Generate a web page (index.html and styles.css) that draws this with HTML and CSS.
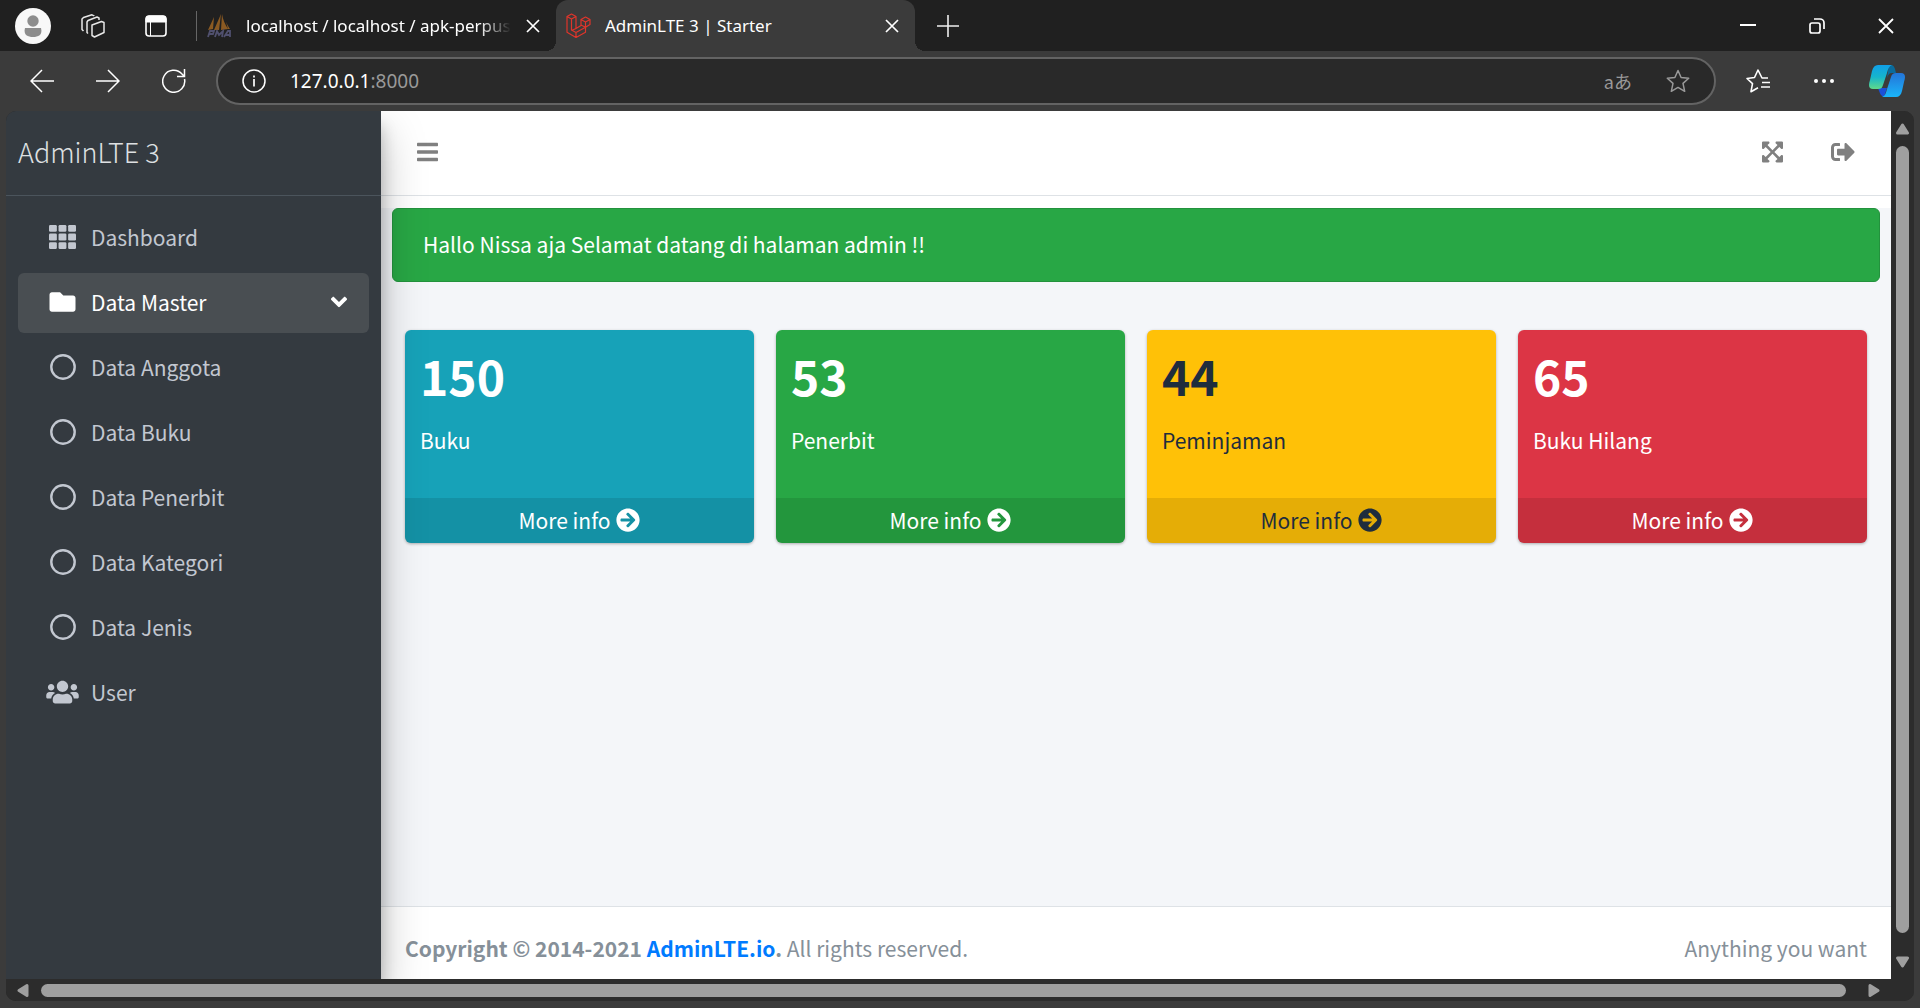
FILE: index.html
```html
<!DOCTYPE html>
<html lang="id">
<head>
<meta charset="utf-8">
<title>AdminLTE 3 | Starter</title>
<link rel="stylesheet" href="styles.css">
</head>
<body>
<svg class="sprite" aria-hidden="true">
  <symbol id="close" viewBox="0 0 16 16"><path d="M2 2l12 12M14 2L2 14" fill="none" stroke="currentColor" stroke-width="1.7"/></symbol>
  <symbol id="ring" viewBox="0 0 26 26"><circle cx="13" cy="13" r="11.700" fill="none" stroke="currentColor" stroke-width="2.400"/></symbol>
  <symbol id="star" viewBox="0 0 24 24"><path d="M12 1.500l3.100 7 7.600.8-5.700 5.100 1.700 7.900-6.700-3.900-6.700 3.900L7 14.400 1.300 9.300l7.600-.8z" fill="none" stroke="currentColor" stroke-width="1.500" stroke-linejoin="round"/></symbol>
  <symbol id="arrow-circle" viewBox="0 0 512 512"><path fill="currentColor" d="M256 8c137 0 248 111 248 248S393 504 256 504 8 393 8 256 119 8 256 8zm-28.900 143.600l75.500 72.400H120c-13.300 0-24 10.700-24 24v16c0 13.300 10.700 24 24 24h182.600l-75.500 72.400c-9.700 9.300-9.900 24.800-.4 34.300l11 10.900c9.400 9.400 24.600 9.400 33.900 0L404.300 273c9.400-9.400 9.400-24.600 0-33.900L271.600 106.300c-9.400-9.400-24.600-9.400-33.900 0l-11 10.900c-9.500 9.600-9.300 25.100.4 34.400z"/></symbol>
</svg>
<div class="browser">
  <div class="tabstrip">
    <button class="btn profile" aria-label="Profile"><svg viewBox="0 0 36 36"><circle cx="18" cy="18" r="18" fill="#f8f8f8"/><circle cx="18" cy="13" r="5.700" fill="#8d8d8d"/><path d="M10 20h16c2 7-3 9-8 9s-10-2-8-9z" fill="#8d8d8d"/></svg></button>
    <button class="btn collections" aria-label="Workspaces"><svg viewBox="0 0 24 24" fill="none" stroke="#e8e8e8" stroke-width="1.500" stroke-linejoin="round"><path d="M11 11l9.500-3.500 2.500 1v10L13.500 23 11 21.500zM7 19.500l-1-1V8l1-1.500L16 3l2 1v2M2.500 17L1 15.500V5l1.500-1.500L11 .800l2 1V2"/></svg></button>
    <button class="btn tabmenu" aria-label="Tab actions"><svg viewBox="0 0 22 22"><rect x="1" y="1" width="20" height="20" rx="3" fill="none" stroke="#fff" stroke-width="1.600"/><path d="M1 6V4a3 3 0 0 1 3-3h14a3 3 0 0 1 3 3v3H1zM5.500 7v14" fill="#fff" stroke="#fff"/></svg></button>
    <span class="divider"></span>
    <div class="tab">
      <svg class="favicon" viewBox="0 0 25 25"><path d="M7 4L6 16l-5 1zM14 1l-2 16H7zM15 1c1 6 3 10 6 15l-7 1zM18 5c1 5 3 8 5 11h-2z" fill="#8b5a22"/><path d="M1 24l2-6h4l-1 3H2M8 24l2-6 2 4 4-4-1 6M17 24l4-6h2v6M19 22h4" fill="none" stroke="#50506e" stroke-width="1.800"/></svg>
      <span class="tab-title faded">localhost / localhost / apk-perpus</span>
      <button class="btn close" aria-label="Close tab"><svg viewBox="0 0 16 16"><use href="#close"/></svg></button>
    </div>
    <div class="tab active">
      <svg class="favicon" viewBox="0 0 25 25" fill="none" stroke="#e0352b" stroke-width="1.200" stroke-linejoin="round"><path d="M1 3.500L5.500 1 10 3.500v12l5-3V6.500L19.500 4 24 6.500v5l-4.500 2.700v5L10 24.500l-9-5.200zM1 3.500L5.500 6 10 3.500M5.500 6v11l4.500 2.500v5M10 15.500l-4.500 2M10 19.500l9.500-5.300L15 12M15 6.500L19.500 9 24 6.500M19.500 9v5.200"/></svg>
      <span class="tab-title">AdminLTE 3 | Starter</span>
      <button class="btn close" aria-label="Close tab"><svg viewBox="0 0 16 16"><use href="#close"/></svg></button>
    </div>
    <button class="btn newtab" aria-label="New tab"><svg viewBox="0 0 22 22"><path d="M11 0v22M0 11h22" stroke="#eee" stroke-width="1.600"/></svg></button>
    <div class="window-controls">
      <button class="btn" aria-label="Minimize"><svg viewBox="0 0 16 16"><path d="M0 7h16" stroke="#fff" stroke-width="2"/></svg></button>
      <button class="btn" aria-label="Restore"><svg viewBox="0 0 16 16" fill="none" stroke="#fff" stroke-width="1.700"><rect x="1" y="5" width="10" height="10" rx="2"/><path d="M5 1h6a4 4 0 0 1 4 4v6"/></svg></button>
      <button class="btn" aria-label="Close"><svg viewBox="0 0 16 16"><path d="M1 1l14 14M15 1L1 15" stroke="#fff" stroke-width="1.800"/></svg></button>
    </div>
  </div>
  <div class="toolbar">
    <button class="btn" aria-label="Back"><svg viewBox="0 0 24 24" fill="none" stroke="#fff" stroke-width="1.500"><path d="M24 12H1M12 1L1 12l11 11"/></svg></button>
    <button class="btn" aria-label="Forward"><svg viewBox="0 0 24 24" fill="none" stroke="#fff" stroke-width="1.500"><path d="M0 12h23M12 1l11 11-11 11"/></svg></button>
    <button class="btn" aria-label="Refresh"><svg viewBox="0 0 24 24" fill="none" stroke="#fff" stroke-width="1.500"><path d="M22.500 10A11 11 0 1 1 20 5l2.500 2.500M22.500 0v7.500H15"/></svg></button>
    <div class="address">
      <svg class="icon24" viewBox="0 0 24 24"><circle cx="12" cy="12" r="11" fill="none" stroke="#fff" stroke-width="1.500"/><path d="M12 10v7.500M12 6.500v2" stroke="#fff" stroke-width="1.700"/></svg>
      <span class="url">127.0.0.1<span class="port">:8000</span></span>
      <span class="translate">aあ</span>
      <button class="btn" aria-label="Add to favorites"><svg class="dim" viewBox="0 0 24 24"><use href="#star"/></svg></button>
    </div>
    <button class="btn" aria-label="Favorites"><svg viewBox="0 0 24 24" fill="none" stroke="#fff" stroke-width="1.600"><path d="M22 9h-6L12 1 8.500 8.500 1 9.500l5.500 5.200L5 22.700l7-4M16 13.500h8M15 18h9" stroke-linejoin="round"/></svg></button>
    <button class="btn" aria-label="Settings"><svg viewBox="0 0 24 24" fill="#fff"><circle cx="4" cy="12" r="2"/><circle cx="12" cy="12" r="2"/><circle cx="20" cy="12" r="2"/></svg></button>
    <button class="btn copilot" aria-label="Copilot"><svg viewBox="0 0 36 32"><defs><linearGradient id="ga" x2="0" y2="1"><stop stop-color="#109fe8"/><stop offset=".5" stop-color="#16b5cc"/><stop offset="1" stop-color="#5fd98a"/></linearGradient><linearGradient id="gb" x2="0" y2="1"><stop stop-color="#2474d8"/><stop offset="1" stop-color="#1ab5fa"/></linearGradient></defs><path d="M20 0h2c3 0 4 3 5 8h-4c-3 0-4 2-5 5z" fill="#0a6b9c"/><path d="M9 23h9l-3 9c-3-1-4-3-6-9z" fill="#1b50d8"/><path d="M9 0h14c-3 1-4 4-5 8l-4 12c-1 3-2 4-5 4H4c-4 0-5-3-3-9L3 6c1-4 3-6 6-6z" fill="url(#ga)"/><path d="M27 8h5c4 0 5 3 3 9l-2 9c-1 4-3 6-6 6H13c3-1 4-4 5-8l4-12c1-3 2-4 5-4z" fill="url(#gb)"/></svg></button>
  </div>
  <div class="viewport">
    <aside class="sidebar">
      <a class="brand" href="#">AdminLTE 3</a>
      <nav class="menu">
        <a href="#"><span class="ico"><svg width="27" height="24" viewBox="0 32 512 448" preserveAspectRatio="none" fill="currentColor"><rect y="32" width="149" height="128" rx="24"/><rect x="181" y="32" width="149" height="128" rx="24"/><rect x="363" y="32" width="149" height="128" rx="24"/><rect y="192" width="149" height="128" rx="24"/><rect x="181" y="192" width="149" height="128" rx="24"/><rect x="363" y="192" width="149" height="128" rx="24"/><rect y="352" width="149" height="128" rx="24"/><rect x="181" y="352" width="149" height="128" rx="24"/><rect x="363" y="352" width="149" height="128" rx="24"/></svg></span>Dashboard</a>
        <a href="#" class="current"><span class="ico"><svg width="27" height="26" viewBox="0 0 512 512" fill="currentColor"><path d="M464 128H272l-64-64H48C21.490 64 0 85.490 0 112v288c0 26.510 21.490 48 48 48h416c26.510 0 48-21.490 48-48V176c0-26.510-21.490-48-48-48z"/></svg></span>Data Master<svg class="caret" viewBox="0 0 320 512" fill="currentColor"><path d="M143 352.300L7 216.300c-9.400-9.400-9.400-24.600 0-33.900l22.600-22.600c9.400-9.400 24.600-9.400 33.900 0l96.400 96.400 96.400-96.400c9.400-9.400 24.600-9.400 33.900 0l22.600 22.600c9.400 9.400 9.400 24.600 0 33.900l-136 136c-9.200 9.400-24.400 9.400-33.800 0z"/></svg></a>
        <a href="#"><span class="ico"><svg width="26" height="26"><use href="#ring"/></svg></span>Data Anggota</a>
        <a href="#"><span class="ico"><svg width="26" height="26"><use href="#ring"/></svg></span>Data Buku</a>
        <a href="#"><span class="ico"><svg width="26" height="26"><use href="#ring"/></svg></span>Data Penerbit</a>
        <a href="#"><span class="ico"><svg width="26" height="26"><use href="#ring"/></svg></span>Data Kategori</a>
        <a href="#"><span class="ico"><svg width="26" height="26"><use href="#ring"/></svg></span>Data Jenis</a>
        <a href="#"><span class="ico"><svg width="33" height="26" viewBox="0 0 640 512" fill="currentColor"><path d="M96 224c35.300 0 64-28.700 64-64s-28.700-64-64-64-64 28.700-64 64 28.700 64 64 64zm448 0c35.300 0 64-28.700 64-64s-28.700-64-64-64-64 28.700-64 64 28.700 64 64 64zm32 32h-64c-17.600 0-33.500 7.100-45.100 18.600 40.300 22.100 68.900 62 75.100 109.400h66c17.700 0 32-14.300 32-32v-32c0-35.300-28.700-64-64-64zm-256 0c61.900 0 112-50.100 112-112S381.900 32 320 32 208 82.100 208 144s50.100 112 112 112zm76.800 32h-8.300c-20.800 10-43.900 16-68.500 16s-47.600-6-68.500-16h-8.300C179.600 288 128 339.600 128 403.200V432c0 26.500 21.500 48 48 48h288c26.500 0 48-21.500 48-48v-28.800c0-63.600-51.600-115.200-115.200-115.200zm-223.700-13.400C161.500 263.100 145.600 256 128 256H64c-35.300 0-64 28.700-64 64v32c0 17.700 14.300 32 32 32h65.900c6.300-47.400 34.900-87.300 75.200-109.400z"/></svg></span>User</a>
      </nav>
    </aside>
    <div class="page">
      <header class="navbar">
        <button class="btn" aria-label="Toggle menu"><svg width="21" height="24" viewBox="0 0 448 512" fill="currentColor"><rect y="60" width="448" height="72" rx="16"/><rect y="220" width="448" height="72" rx="16"/><rect y="380" width="448" height="72" rx="16"/></svg></button>
        <button class="btn expand" aria-label="Fullscreen"><svg width="21" height="24" viewBox="0 0 448 512" fill="currentColor"><path d="M448 344v112a23.940 23.940 0 0 1-24 24H312c-21.390 0-32.090-25.900-17-41l36.200-36.200L224 295.600 116.770 402.900 153 439c15.090 15.100 4.390 41-17 41H24a23.940 23.940 0 0 1-24-24V344c0-21.400 25.890-32.100 41-17l36.190 36.200L184.460 256 77.180 148.700 41 185c-15.100 15.100-41 4.400-41-17V56a23.940 23.940 0 0 1 24-24h112c21.390 0 32.090 25.900 17 41l-36.200 36.200L224 216.400l107.230-107.300L295 73c-15.090-15.100-4.390-41 17-41h112a23.940 23.940 0 0 1 24 24v112c0 21.400-25.890 32.100-41 17l-36.190-36.200L263.540 256l107.280 107.300L407 327.100c15.100-15.200 41-4.500 41 16.900z"/></svg></button>
        <button class="btn" aria-label="Log out"><svg width="24" height="24" viewBox="0 0 512 512" fill="currentColor"><path d="M497 273L329 441c-15 15-41 4.500-41-17v-96H152c-13.300 0-24-10.700-24-24v-96c0-13.300 10.700-24 24-24h136V88c0-21.400 25.900-32 41-17l168 168c9.300 9.400 9.300 24.600 0 34zM192 436v-40c0-6.600-5.400-12-12-12H96c-17.700 0-32-14.300-32-32V160c0-17.700 14.300-32 32-32h84c6.600 0 12-5.400 12-12V76c0-6.600-5.400-12-12-12H96c-53 0-96 43-96 96v192c0 53 43 96 96 96h84c6.600 0 12-5.400 12-12z"/></svg></button>
      </header>
      <main class="content">
        <div class="alert" role="alert">Hallo Nissa aja Selamat datang di halaman admin !!</div>
        <div class="cards">
          <section class="card info"><div class="inner"><h3>150</h3><p>Buku</p></div><a href="#">More info <svg><use href="#arrow-circle"/></svg></a></section>
          <section class="card success"><div class="inner"><h3>53</h3><p>Penerbit</p></div><a href="#">More info <svg><use href="#arrow-circle"/></svg></a></section>
          <section class="card warning"><div class="inner"><h3>44</h3><p>Peminjaman</p></div><a href="#">More info <svg><use href="#arrow-circle"/></svg></a></section>
          <section class="card danger"><div class="inner"><h3>65</h3><p>Buku Hilang</p></div><a href="#">More info <svg><use href="#arrow-circle"/></svg></a></section>
        </div>
      </main>
      <footer class="footer">
        <span><strong>Copyright © 2014-2021 <a href="#">AdminLTE.io</a>.</strong> All rights reserved.</span>
        <span>Anything you want</span>
      </footer>
    </div>
    <div class="scroll vertical">
      <svg width="15" height="12" viewBox="0 0 15 12"><path d="M7.500 2l5 8h-10z"/></svg>
      <span class="thumb"></span>
      <svg width="15" height="12" viewBox="0 0 15 12"><path d="M7.500 10l5-8h-10z"/></svg>
    </div>
    <div class="scroll horizontal">
      <svg width="12" height="15" viewBox="0 0 12 15"><path d="M2 7.500l8-5v10z"/></svg>
      <span class="thumb"></span>
      <svg width="12" height="15" viewBox="0 0 12 15"><path d="M10 7.500l-8-5v10z"/></svg>
    </div>
  </div>
</div>
</body>
</html>
```
FILE: styles.css
```css
* { box-sizing: border-box; }

body {
  margin: 0;
  background: #3b3b3b;
  font-family: "Noto Sans CJK SC", "Open Sans", sans-serif;
  font-size: 21px;
  line-height: 36px;
}

a { text-decoration: none; }

.sprite { position: absolute; width: 0; height: 0; }

.btn {
  display: flex;
  flex: none;
  padding: 0;
  border: 0;
  background: none;
  color: inherit;
}

.browser {
  display: flex;
  flex-direction: column;
  min-height: 100vh;
}

/* Browser chrome */
.tabstrip {
  display: flex;
  align-items: center;
  height: 51px;
  padding: 0 26px 0 15px;
  background: #202020;
  color: #fff;
  font-family: "Noto Sans", sans-serif;
  font-size: 17px;
}

.profile svg { width: 36px; height: 36px; }
.collections { margin-left: 30px; }
.collections svg { width: 24px; height: 24px; }
.tabmenu { margin-left: 40px; }
.tabmenu svg { width: 22px; height: 22px; }
.divider { width: 1px; height: 30px; margin-left: 29px; background: #666; }

.tab {
  display: flex;
  flex: none;
  align-items: center;
  width: 359px;
  height: 51px;
  padding: 0 15px 0 10px;
}

.favicon { flex: none; width: 25px; height: 25px; margin-right: 14px; }

.tab-title {
  flex: 1;
  overflow: hidden;
  white-space: nowrap;
}

.faded {
  margin-right: 14px;
  -webkit-mask-image: linear-gradient(to left, transparent, #000 32px);
  mask-image: linear-gradient(to left, transparent, #000 32px);
}

.close svg { width: 16px; height: 16px; }

.active {
  position: relative;
  border-radius: 12px 12px 0 0;
  background: #3b3b3b;
}

.active::before,
.active::after {
  content: "";
  position: absolute;
  bottom: 0;
  width: 10px;
  height: 10px;
}

.active::before { right: 100%; background: radial-gradient(circle at 0 0, #202020 10px, #3b3b3b 10px); }
.active::after { left: 100%; background: radial-gradient(circle at 100% 0, #202020 10px, #3b3b3b 10px); }

.newtab { margin-left: 22px; }
.newtab svg { width: 22px; height: 22px; }

.window-controls {
  display: flex;
  gap: 53px;
  margin-left: auto;
}

.window-controls svg { width: 16px; height: 16px; }

.toolbar {
  display: flex;
  align-items: center;
  height: 60px;
  padding: 0 15px 0 30px;
}

.toolbar svg { width: 24px; height: 24px; }
.toolbar > .btn { margin-right: 42px; }

.address {
  display: flex;
  flex: 1;
  align-items: center;
  height: 48px;
  margin: 0 30px 0 -12px;
  padding: 0 24px;
  border: 2px solid #636363;
  border-radius: 24px;
  background: #292929;
}

.url {
  flex: 1;
  margin-left: 24px;
  color: #fff;
  font-family: "Noto Sans", sans-serif;
  font-size: 19px;
}

.port { color: #999; }
.translate { margin-right: 34px; color: #999; font-size: 18px; }
.dim { color: #999; }
.toolbar > .copilot { margin-right: 0; margin-left: -9px; }
.toolbar .copilot svg { width: 36px; height: 32px; }

/* Web page area with its two scrollbars */
.viewport {
  display: grid;
  flex: 1;
  grid-template-columns: 375px 1fr 23px;
  grid-template-rows: 1fr 22px;
  margin: 0 6px 7px;
  overflow: hidden;
  border-radius: 10px;
  background: #2c2c2c;
}

.sidebar {
  position: relative;
  background: #343a40;
  color: #c2c7d0;
  box-shadow: 0 21px 42px rgba(0, 0, 0, .25), 0 15px 15px rgba(0, 0, 0, .22);
}

.brand {
  display: block;
  height: 85px;
  padding: 23px 12px;
  border-bottom: 1px solid #4b545c;
  color: #dee0e2;
  font-size: 27px;
  font-weight: 300;
}

.menu {
  display: flex;
  flex-direction: column;
  gap: 5px;
  padding: 12px;
}

.menu a {
  display: flex;
  align-items: center;
  height: 60px;
  padding: 0 22px 3px 24px;
  border-radius: 6px;
  color: inherit;
}

.menu .current { background: #494e52; color: #fff; }

.ico {
  display: flex;
  justify-content: center;
  width: 41px;
  margin-right: 8px;
}

.caret { width: 16px; height: 26px; margin-left: auto; }

.page {
  display: flex;
  flex-direction: column;
  min-width: 0;
  background: #f4f6f9;
}

.navbar {
  display: flex;
  align-items: center;
  height: 85px;
  padding: 0 36px 2px;
  border-bottom: 1px solid #dee2e6;
  background: #fff;
  color: #808080;
}

.expand { margin: 0 48px 0 auto; }

.content {
  flex: 1;
  border-top: 12px solid #fff;
}

.alert {
  margin: 0 11px 48px;
  padding: 17px 30px 19px;
  border: 1px solid #23923d;
  border-radius: 6px;
  background: #28a745;
  color: #fff;
}

.cards {
  display: grid;
  grid-template-columns: repeat(4, 1fr);
  gap: 22px;
  margin: 0 24px;
}

.card {
  overflow: hidden;
  border-radius: 6px;
  box-shadow: 0 1px 3px rgba(0, 0, 0, .3);
  color: #fff;
}

.inner { height: 168px; padding: 15px; }

.card h3 {
  margin: 0 0 17px;
  font-size: 48px;
  font-weight: 700;
  line-height: 60px;
}

.card p { margin: 0; }

.card a {
  display: flex;
  align-items: center;
  justify-content: center;
  gap: 6px;
  height: 45px;
  padding-bottom: 2px;
  background: rgba(0, 0, 0, .1);
  color: inherit;
}

.card svg { width: 24px; height: 24px; }

.info { background: #17a2b8; }
.success { background: #28a745; }
.warning { background: #ffc107; color: #1f2d3d; }
.danger { background: #dc3545; }

.footer {
  display: flex;
  justify-content: space-between;
  padding: 23px 24px 13px;
  border-top: 1px solid #dee2e6;
  background: #fff;
  color: #869099;
}

.footer a { color: #007bff; }

.scroll {
  position: relative;
  display: flex;
  align-items: center;
  background: #2c2c2c;
  fill: #9f9f9f;
}

.scroll path { stroke: #9f9f9f; stroke-width: 3; stroke-linejoin: round; }
.thumb { flex: 1; border-radius: 7px; background: #9f9f9f; }

.vertical { flex-direction: column; gap: 11px; padding: 12px 0 11px; }
.vertical .thumb { width: 13px; margin-bottom: 12px; }

.horizontal { grid-column: 1 / 4; gap: 12px; padding: 0 34px 0 11px; }
.horizontal .thumb { height: 13px; margin-right: 10px; }
```
